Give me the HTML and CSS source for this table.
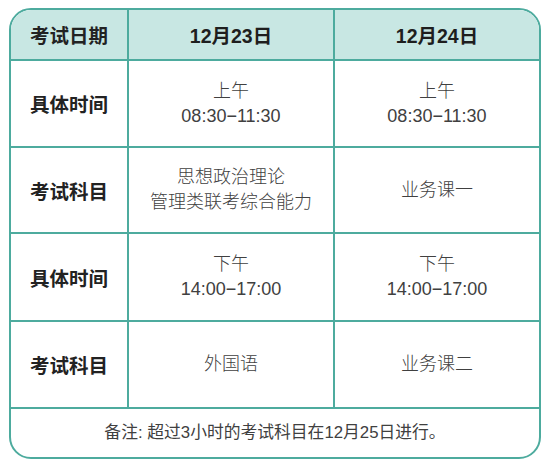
FILE: index.html
```html
<!DOCTYPE html>
<html lang="zh-CN">
<head>
<meta charset="utf-8">
<link rel="stylesheet" href="styles.css">
</head>
<body>
<div class="page">
  <div class="table">
    <div class="cell head label">考试日期</div>
    <div class="cell head">12月23日</div>
    <div class="cell head last">12月24日</div>

    <div class="cell label">具体时间</div>
    <div class="cell body"><span>上午</span><span>08:30−11:30</span></div>
    <div class="cell body last"><span>上午</span><span>08:30−11:30</span></div>

    <div class="cell label">考试科目</div>
    <div class="cell body"><span>思想政治理论</span><span>管理类联考综合能力</span></div>
    <div class="cell body last"><span>业务课一</span></div>

    <div class="cell label">具体时间</div>
    <div class="cell body"><span>下午</span><span>14:00−17:00</span></div>
    <div class="cell body last"><span>下午</span><span>14:00−17:00</span></div>

    <div class="cell label">考试科目</div>
    <div class="cell body"><span>外国语</span></div>
    <div class="cell body last"><span>业务课二</span></div>

    <div class="cell note">备注: 超过3小时的考试科目在12月25日进行。</div>
  </div>
</div>
</body>
</html>
```

FILE: styles.css
```css
* { box-sizing: border-box; }
html, body { margin: 0; padding: 0; background: #ffffff; }
body {
  font-family: "Liberation Sans", "Noto Sans CJK SC", sans-serif;
  width: 550px;
  height: 467px;
}
.page {
  padding: 8px 9px 8px 9px;
}
.table {
  width: 532px;
  height: 451px;
  border: 2px solid #4dab9e;
  border-radius: 22px;
  overflow: hidden;
  display: grid;
  grid-template-columns: 118px 206px 1fr;
  grid-template-rows: 51px 87px 86px 88px 87px 1fr;
}
.cell {
  border-right: 2px solid #4dab9e;
  border-bottom: 2px solid #4dab9e;
  display: flex;
  flex-direction: column;
  align-items: center;
  justify-content: center;
  text-align: center;
}
.cell.last { border-right: none; }
.head {
  background: #c8e7e3;
  font-weight: bold;
  font-size: 19.5px;
  color: #1e1e1e;
}
.label {
  font-weight: bold;
  font-size: 19.5px;
  color: #222222;
}
.body {
  font-size: 18px;
  color: #404040;
  line-height: 25px;
  font-weight: 300;
}
.note {
  grid-column: 1 / 4;
  border-right: none;
  border-bottom: none;
  font-size: 16.8px;
  color: #404040;
  padding-bottom: 4px;
}
```
